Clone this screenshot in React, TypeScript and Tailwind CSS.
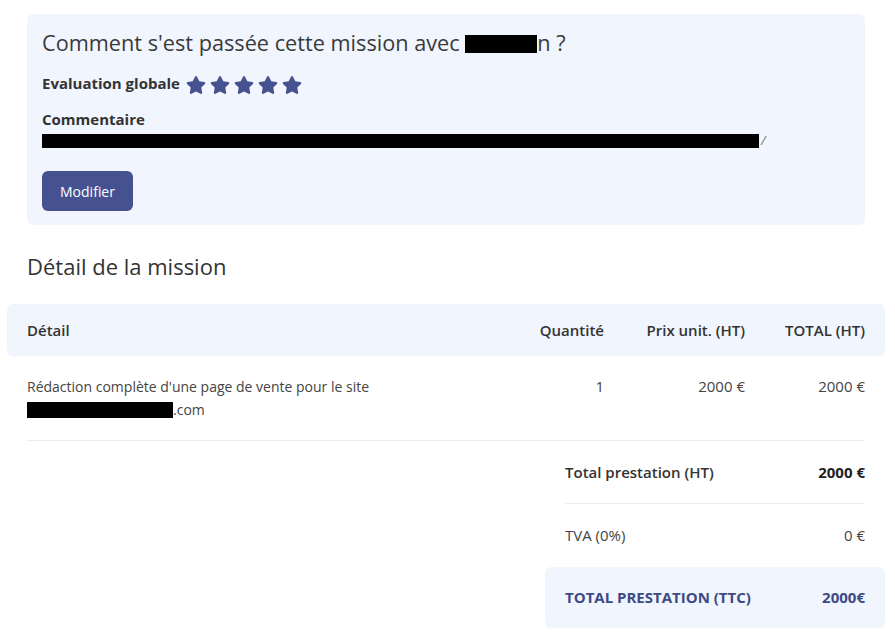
import { FaStar } from 'react-icons/fa';

const Redacted = ({ className }: { className: string }) => (
  <span className={`inline-block bg-black align-middle ${className}`} />
);

const App = () => {
  const columns = [
    { label: 'Quantité', value: '1' },
    { label: 'Prix unit. (HT)', value: '2000 €' },
    { label: 'TOTAL (HT)', value: '2000 €' },
  ];
  return (
    <div className="w-[895px] h-[634px] bg-white text-[#333] font-['Open_Sans',sans-serif] overflow-hidden">
      <div className="ml-[27px] mr-[30px] mt-[14px] bg-[#f1f5fe] rounded-md px-[15px] pt-[15px] pb-[14px]">
        <h2 className="text-[21.7px] leading-[28px] text-[#3a3a3a]">
          Comment s'est passée cette mission avec{' '}
          <Redacted className="w-[72px] h-[18px] -mt-[3px]" />
          n ?
        </h2>
        <div className="flex items-center mt-[14px] h-[24px]">
          <span className="text-[15px] font-bold text-[#333]">Evaluation globale</span>
          <div className="flex gap-[4px] ml-[6px] mt-[3px] text-[#46528f]">
            {[0, 1, 2, 3, 4].map((i) => (
              <FaStar key={i} className="w-[20px] h-[20px]" />
            ))}
          </div>
        </div>
        <div className="text-[15px] font-bold mt-[14px] leading-[20px]">Commentaire</div>
        <div className="mt-[2px] h-[20px] flex items-center">
          <Redacted className="w-[717px] h-[14px]" />
          <span className="text-[13px] italic text-[#777] ml-[2px]">/</span>
        </div>
        <button className="mt-[20px] w-[91px] h-[40px] rounded-md bg-[#465192] text-white text-[14px]">
          Modifier
        </button>
      </div>

      <h3 className="ml-[27px] mt-[27px] text-[22px] leading-[28px] text-[#333]">Détail de la mission</h3>

      <div className="ml-[7px] mr-[10px] mt-[24px]">
        <div className="grid grid-cols-[1fr_110px_141px_120px] items-center h-[52px] px-5 bg-[#f1f5fe] rounded-md text-[15px] font-semibold text-[#333]">
          <span>Détail</span>
          {columns.map((c) => (
            <span key={c.label} className="text-right">
              {c.label}
            </span>
          ))}
        </div>
        <div className="mx-5 grid grid-cols-[1fr_110px_141px_120px] pt-[19px] pb-[19px] border-b border-[#ececec] text-[14px] leading-[23px] text-[#444]">
          <div>
            Rédaction complète d'une page de vente pour le site
            <br />
            <Redacted className="w-[146px] h-[16px] -mt-[2px]" />
            .com
          </div>
          {columns.map((c) => (
            <span key={c.label} className="text-right text-[15px]">
              {c.value}
            </span>
          ))}
        </div>

        <div className="ml-auto w-[340px] text-[15px]">
          <div className="mx-5 h-[63px] flex items-center justify-between border-b border-[#ececec]">
            <span className="font-semibold text-[#333]">Total prestation (HT)</span>
            <span className="font-bold text-[#222]">2000 €</span>
          </div>
          <div className="mx-5 h-[63px] flex items-center justify-between text-[#444]">
            <span>TVA (0%)</span>
            <span>0 €</span>
          </div>
          <div className="h-[61px] px-5 flex items-center justify-between bg-[#f1f5fe] rounded-md font-bold text-[#3e4a84]">
            <span>TOTAL PRESTATION (TTC)</span>
            <span>2000€</span>
          </div>
        </div>
      </div>
    </div>
  );
};

export default App;
